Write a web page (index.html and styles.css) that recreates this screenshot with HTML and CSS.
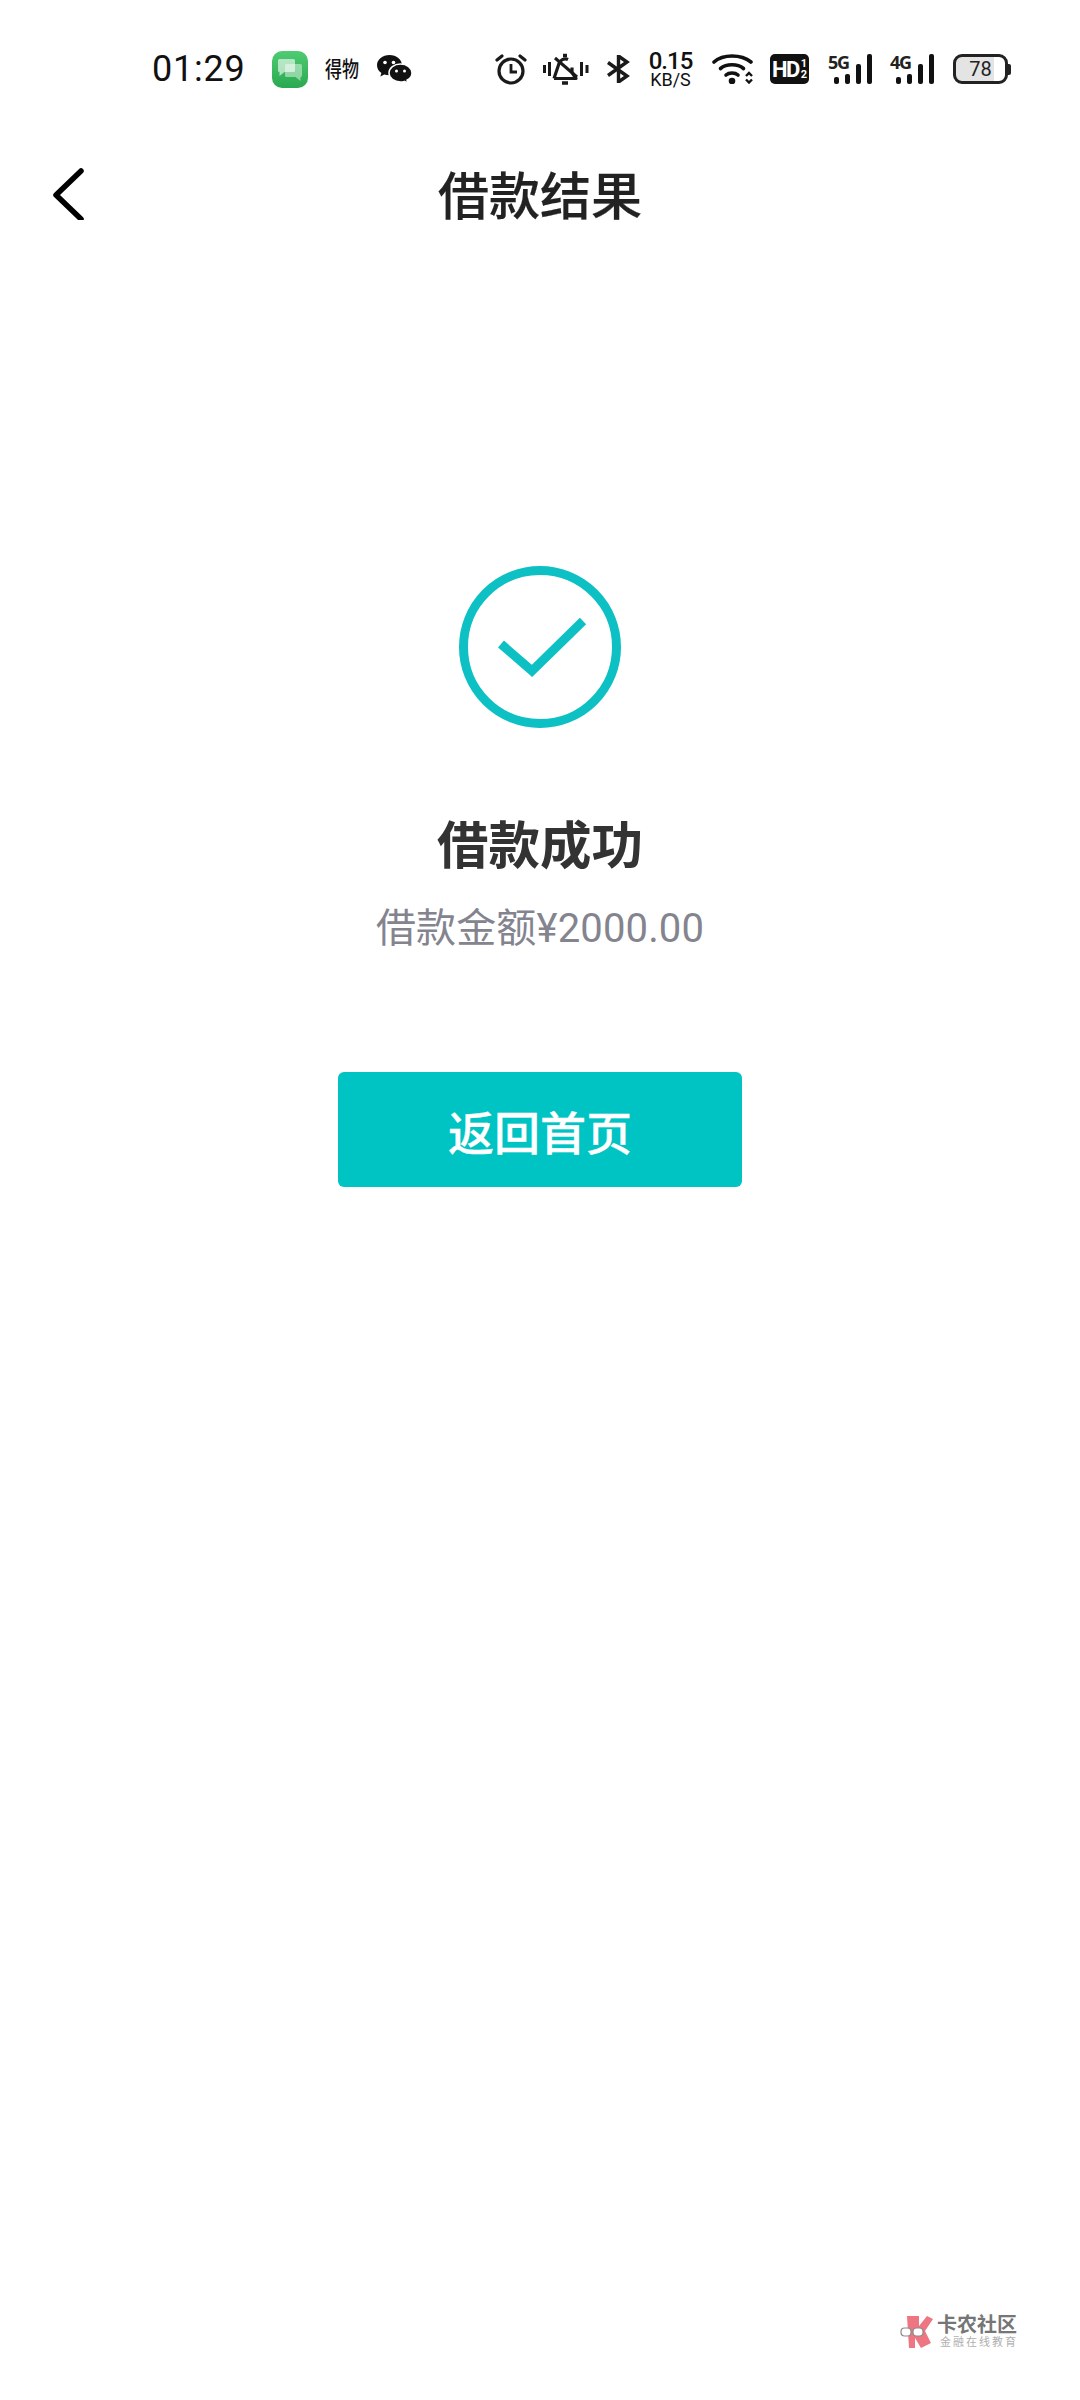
FILE: index.html
```html
<!DOCTYPE html>
<html lang="zh-CN">
<head>
    <meta charset="UTF-8">
    <meta name="viewport" content="width=device-width, initial-scale=1.0">
    <title>借款结果</title>
    <link rel="stylesheet" href="styles.css">
</head>
<body>
    <div class="page">
        <!-- 状态栏 -->
        <div class="status-bar">
            <div class="status-left">
                <span class="clock">01:29</span>
                <svg class="app-icon" width="36" height="37" viewBox="0 0 36 37">
                    <defs>
                        <linearGradient id="appGreen" x1="0" y1="0" x2="0" y2="1">
                            <stop offset="0" stop-color="#4fcb73"/>
                            <stop offset="1" stop-color="#2aa950"/>
                        </linearGradient>
                    </defs>
                    <rect width="36" height="37" rx="10" fill="url(#appGreen)"/>
                    <path d="M7.500 8h14a1.500 1.500 0 0 1 1.500 1.500v10a1.500 1.500 0 0 1-1.500 1.500h-9l-5 4v-4a1.500 1.500 0 0 1-1.500-1.500v-10a1.500 1.500 0 0 1 1.500-1.500z" fill="#ffffff" opacity=".6"/>
                    <path d="M14.500 13h14a1.500 1.500 0 0 1 1.500 1.500v10a1.500 1.500 0 0 1-1.500 1.500v4l-5-4h-9a1.500 1.500 0 0 1-1.500-1.500v-10a1.500 1.500 0 0 1 1.500-1.500z" fill="#ffffff" opacity=".45"/>
                </svg>
                <span class="app-word">得物</span>
                <svg width="35" height="29" viewBox="0 0 35 29">
                    <path d="M12.500 0C5.600 0 0 4.500 0 10.200c0 3.200 1.700 5.900 4.400 7.800l-1.100 3.600 4-2.200c1.500.5 3.200.8 5.200.8 6.900 0 12.500-4.500 12.500-10S19.400 0 12.500 0z" fill="#111"/>
                    <path d="M23.500 9C17.100 9 12 13 12 18s5.100 9 11.500 9c1.500 0 2.800-.2 4-.6l3.500 2-1-3.200c3.100-1.700 5-4.300 5-7.200C35 13 29.900 9 23.500 9z" fill="#111" stroke="#fff" stroke-width="1.500"/>
                    <circle cx="8" cy="7.500" r="1.800" fill="#fff"/>
                    <circle cx="16.500" cy="7.500" r="1.800" fill="#fff"/>
                    <circle cx="19.500" cy="16" r="1.500" fill="#fff"/>
                    <circle cx="27.500" cy="16" r="1.500" fill="#fff"/>
                </svg>
            </div>
            <div class="status-right">
                <svg class="ic-alarm" width="32" height="32" viewBox="0 0 32 32" fill="none" stroke="#1a1a1a">
                    <circle cx="16" cy="18" r="12" stroke-width="3.200"/>
                    <path d="M16 11v8h6" stroke-width="2.800"/>
                    <path d="M2 7l5-4M30 7l-5-4" stroke-width="3.200" stroke-linecap="round"/>
                </svg>
                <svg class="ic-mute" width="46" height="32" viewBox="0 0 46 32" fill="none" stroke="#1a1a1a">
                    <path d="M1.500 12v8M6.500 9v14M38.500 9v14M44 12v8" stroke-width="3"/>
                    <path d="M11 25.500h22l-4-6v-5M25 6.500c-4-2-8 1-9 4l-5 15" stroke-width="3.200" stroke-linejoin="round"/>
                    <path d="M12 5l22 19" stroke-width="3"/>
                    <path d="M19 30h6" stroke-width="3.500"/>
                    <path d="M20 2.500h4" stroke-width="3.500"/>
                </svg>
                <svg class="ic-bt" width="24" height="28" viewBox="0 0 24 28" fill="none" stroke="#1a1a1a" stroke-width="3.400">
                    <path d="M2 7.500l19 13.500-8.500 6V1l8.500 6-19 13.500"/>
                </svg>
                <div class="speed">
                    <span class="speed-num">0.15</span>
                    <span class="speed-unit">KB/S</span>
                </div>
                <svg class="ic-wifi" width="43" height="30" viewBox="0 0 43 30" fill="none" stroke="#111" stroke-width="3.600" stroke-linecap="round">
                    <path d="M2 8C11 0 29 0 39 8"/>
                    <path d="M8.500 14.500c6-5 17-5 23 0"/>
                    <path d="M14 21c3-2.600 9-2.600 12 0"/>
                    <circle cx="20" cy="27" r="3.300" fill="#111" stroke="none"/>
                    <path d="M34 22l3-3 3 3M34 25.500l3 3 3-3" stroke-width="2.400" stroke-linecap="butt"/>
                </svg>
                <div class="hd-badge">HD<span class="hd-frac">1<br>2</span></div>
                <div class="signal">
                    <span class="net-label">5G</span>
                    <div class="bars">
                        <i class="bar bar-1"></i><i class="bar bar-2"></i><i class="bar bar-3"></i><i class="bar bar-4"></i>
                    </div>
                </div>
                <div class="signal">
                    <span class="net-label">4G</span>
                    <div class="bars">
                        <i class="bar bar-1"></i><i class="bar bar-2"></i><i class="bar bar-3"></i><i class="bar bar-4"></i>
                    </div>
                </div>
                <div class="battery">
                    <div class="battery-body">78</div>
                    <div class="battery-cap"></div>
                </div>
            </div>
        </div>

        <!-- 标题栏 -->
        <header class="nav">
            <svg class="back" width="32" height="54" viewBox="0 0 32 54" fill="none" stroke="#000" stroke-width="5.500" stroke-linecap="round" stroke-linejoin="round">
                <path d="M29 5L4 29l25 24"/>
            </svg>
            <h1 class="nav-title">借款结果</h1>
        </header>

        <!-- 结果 -->
        <main class="result">
            <svg class="result-icon" width="162" height="162" viewBox="0 0 162 162" fill="none" stroke="#0dc0c4" stroke-width="9">
                <circle cx="81" cy="81" r="76.500"/>
                <path d="M42 78l31 27 51-50"/>
            </svg>
            <h2 class="result-title">借款成功</h2>
            <p class="result-amount">借款金额¥2000.00</p>
            <button class="home-btn">返回首页</button>
        </main>

        <!-- 水印 -->
        <div class="watermark">
            <svg width="34" height="34" viewBox="0 0 34 34">
                <path d="M7 1H19V11L27 1l6 3-8 12 6 12-10 5-6-10V33H9z" fill="#ee7683"/>
                <rect x="1" y="13" width="10" height="8" rx="3.500" fill="#fff" stroke="#8c8c8c" stroke-width="1.200"/>
                <rect x="13" y="13" width="10" height="8" rx="3.500" fill="#fff" stroke="#8c8c8c" stroke-width="1.200"/>
            </svg>
            <div class="watermark-text">
                <span class="watermark-name">卡农社区</span>
                <span class="watermark-sub">金融在线教育</span>
            </div>
        </div>
    </div>
</body>
</html>
```

FILE: styles.css
```css
* {
    box-sizing: border-box;
}

body {
    margin: 0;
    background: #ffffff;
    font-family: Roboto, "Noto Sans CJK SC", sans-serif;
}

.page {
    position: relative;
    width: 1080px;
    height: 2400px;
    overflow: hidden;
    background: #ffffff;
}

/* 状态栏 */
.status-bar {
    display: flex;
    align-items: center;
    justify-content: space-between;
    height: 90px;
    padding: 48px 69px 0 152px;
}

.status-left,
.status-right {
    display: flex;
    align-items: center;
}

.clock {
    width: 120px;
    font-size: 36px;
    letter-spacing: 0.8px;
    color: #111111;
}

.app-word {
    width: 52px;
    margin-left: 17px;
    font-size: 17px;
    font-weight: 500;
    line-height: 22px;
    color: #111111;
    transform: scaleY(1.25);
    transform-origin: left center;
}

.ic-alarm { margin-right: 16px; }
.ic-mute { margin-right: 17px; }
.ic-bt { margin-right: 18px; }

.speed {
    display: flex;
    flex-direction: column;
    align-items: center;
    gap: 1px;
    width: 45px;
    margin-right: 19px;
    color: #111111;
}

.speed-num {
    font-size: 24px;
    font-weight: 500;
    line-height: 19px;
    letter-spacing: -1px;
}

.speed-unit {
    font-size: 18px;
    line-height: 15px;
}

.ic-wifi { margin-right: 15px; }

.hd-badge {
    display: flex;
    align-items: center;
    justify-content: center;
    width: 39px;
    height: 30px;
    margin-right: 19px;
    border-radius: 5px;
    background: #111111;
    color: #ffffff;
    font-size: 22px;
    font-weight: 700;
    letter-spacing: -1.500px;
}

.hd-frac {
    margin-left: 2px;
    font-size: 11px;
    line-height: 11px;
    letter-spacing: 0;
}

.signal {
    position: relative;
    width: 44px;
    height: 30px;
    margin-right: 18px;
}

.signal + .signal {
    margin-right: 19px;
}

.net-label {
    position: absolute;
    top: -3px;
    left: 0;
    font-family: "Noto Sans", sans-serif;
    font-size: 18px;
    font-weight: 700;
    line-height: 22px;
    letter-spacing: -1.200px;
    color: #222222;
}

.bars {
    display: flex;
    align-items: flex-end;
    justify-content: flex-end;
    gap: 6px;
    height: 30px;
}

.bar {
    width: 5px;
    border-radius: 2px;
    background: #111111;
}

.bar-1 { height: 7px; }
.bar-2 { height: 10px; }
.bar-3 { height: 20px; }
.bar-4 { height: 30px; }

.battery {
    display: flex;
    align-items: center;
}

.battery-body {
    width: 55px;
    height: 30px;
    border: 3px solid #222222;
    border-radius: 9px;
    background: linear-gradient(to right, #e4e4e4 78%, #ffffff 78%);
    font-size: 20px;
    line-height: 24px;
    text-align: center;
    color: #222222;
}

.battery-cap {
    width: 3px;
    height: 11px;
    border-radius: 0 2px 2px 0;
    background: #222222;
}

/* 标题栏 */
.nav {
    display: grid;
    grid-template-columns: 1fr auto 1fr;
    align-items: center;
    height: 206px;
    padding-left: 52px;
}

.back {
    justify-self: start;
}

.nav-title {
    margin: 0 0 0 -52px;
    font-size: 51px;
    font-weight: 500;
    color: #222222;
    -webkit-text-stroke: 0.2px #222222;
}

/* 结果 */
.result {
    display: flex;
    flex-direction: column;
    align-items: center;
    padding-top: 270px;
}

.result-icon {
    display: block;
}

.result-title {
    margin: 82px 0 0;
    font-size: 51.500px;
    font-weight: 700;
    line-height: 74px;
    color: #333333;
}

.result-amount {
    margin: 17px 0 0;
    font-size: 40px;
    line-height: 56px;
    letter-spacing: 0.150px;
    color: #84848f;
}

.home-btn {
    width: 404px;
    height: 115px;
    margin-top: 115px;
    border: none;
    border-radius: 6px;
    background: #00c3c3;
    color: #ffffff;
    font-family: inherit;
    font-size: 46px;
    font-weight: 500;
    -webkit-text-stroke: 0.3px #ffffff;
}

/* 水印 */
.watermark {
    position: absolute;
    top: 2314px;
    left: 900px;
    display: flex;
    align-items: center;
    gap: 3px;
}

.watermark-text {
    display: flex;
    flex-direction: column;
}

.watermark-name {
    font-size: 20px;
    font-weight: 700;
    line-height: 22px;
    color: #767676;
}

.watermark-sub {
    margin-left: 3px;
    font-size: 11px;
    line-height: 13px;
    letter-spacing: 2px;
    color: #b0b0b0;
}
```
